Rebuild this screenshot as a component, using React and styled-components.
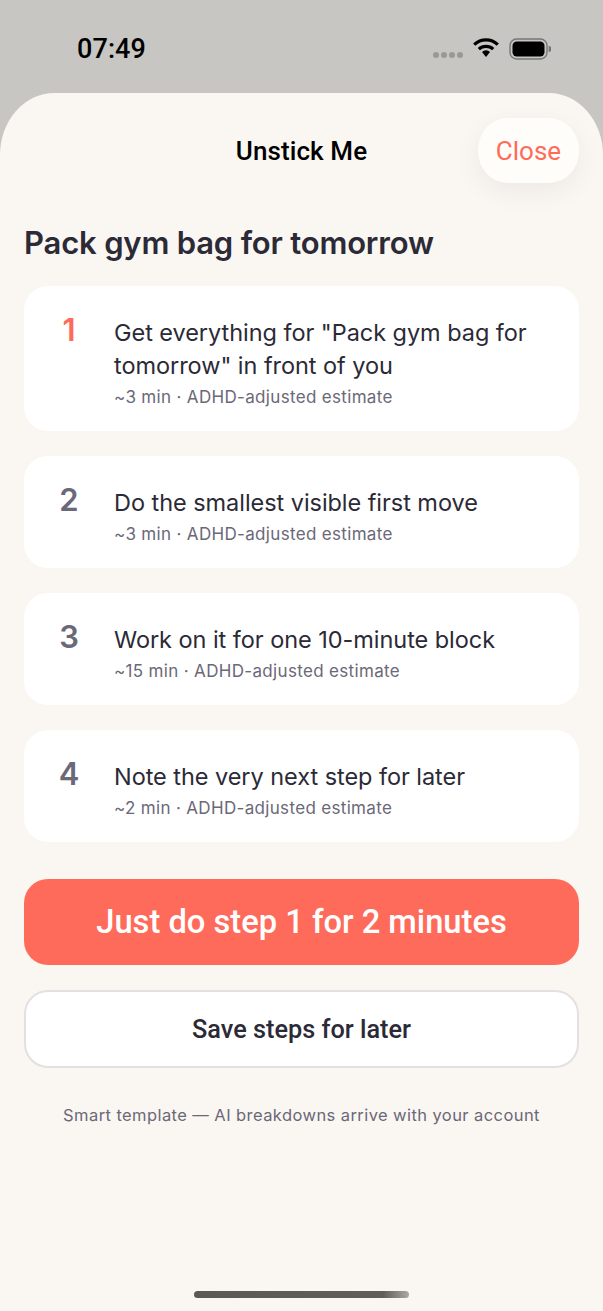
import React from "react";
import styled, { createGlobalStyle } from "styled-components";

const Global = createGlobalStyle`
  html, body { margin: 0; padding: 0; background: #c7c6c2; }
  body { font-family: "Inter", "Liberation Sans", sans-serif; -webkit-font-smoothing: antialiased; }
  * { box-sizing: border-box; }
`;

const Screen = styled.div`
  width: 603px;
  height: 1311px;
  display: flex;
  flex-direction: column;
  overflow: hidden;
  background: #c7c6c2;
`;

const StatusBar = styled.div`
  height: 93px;
  flex: none;
  display: flex;
  align-items: flex-start;
  justify-content: space-between;
  padding: 33px 52px 0 77px;
`;

const Time = styled.div`
  font-family: "Roboto", sans-serif;
  font-size: 27px;
  line-height: 32px;
  font-weight: 500;
  color: #000;
  letter-spacing: 0.1px;
`;

const StatusIcons = styled.div`
  display: flex;
  align-items: center;
  gap: 10px;
  height: 32px;
`;

const Sheet = styled.div`
  position: relative;
  flex: 1;
  background: #faf7f2;
  border-radius: 54px 54px 0 0 / 62px 62px 0 0;
  display: flex;
  flex-direction: column;
  padding: 25px 24px 0;
`;

const Header = styled.header`
  position: relative;
  height: 65px;
  display: flex;
  align-items: center;
  justify-content: center;
`;

const Title = styled.h1`
  margin: 0;
  font-family: "Roboto", sans-serif;
  font-size: 26px;
  font-weight: 500;
  color: #000;
  letter-spacing: 0.1px;
`;

const CloseButton = styled.button`
  position: absolute;
  right: 0;
  top: 0;
  width: 101px;
  height: 65px;
  border: 0;
  padding: 0;
  border-radius: 30px / 32px;
  background: #fffdf9;
  color: #ff6b5b;
  font: 400 26px "Roboto", sans-serif;
  box-shadow: 0 8px 28px rgba(0, 0, 0, 0.06);
`;

const Heading = styled.h2`
  margin: 40px 0 0;
  font-size: 31px;
  line-height: 40px;
  font-weight: 600;
  color: #2b2a36;
  letter-spacing: -0.18px;
`;

const StepList = styled.div`
  margin-top: 23px;
  display: flex;
  flex-direction: column;
  gap: 25px;
`;

const StepCard = styled.div`
  background: #fff;
  border-radius: 24px;
  padding: 30px 24px 23px 90px;
  position: relative;
`;

const StepNumber = styled.span`
  position: absolute;
  left: 25px;
  width: 40px;
  top: 25px;
  text-align: center;
  font-size: 31px;
  line-height: 38px;
  font-weight: 600;
  color: ${(p) => (p.$active ? "#ff6b5b" : "#6b6878")};
`;

const StepText = styled.div`
  font-size: 23.5px;
  line-height: 33px;
  color: #2b2a36;
  letter-spacing: -0.05px;
`;

const StepMeta = styled.div`
  font-size: 17px;
  line-height: 22px;
  margin-top: 4px;
  color: #6b6878;
  letter-spacing: 0.33px;
`;

const PrimaryButton = styled.button`
  margin-top: 37px;
  height: 86px;
  border: 0;
  border-radius: 24px;
  background: #ff6b5b;
  color: #fff;
  font: 500 32.7px "Roboto", sans-serif;
`;

const SecondaryButton = styled.button`
  margin-top: 25px;
  height: 78px;
  border: 2px solid #e3e0e2;
  border-radius: 24px;
  background: #fff;
  color: #2b2a36;
  font: 500 25.3px "Roboto", sans-serif;
`;

const Footnote = styled.p`
  margin: 36px 0 0;
  text-align: center;
  font-size: 16.5px;
  line-height: 22px;
  color: #6b6878;
  letter-spacing: 0.42px;
`;

const HomeIndicator = styled.div`
  position: absolute;
  left: 194px;
  bottom: 13px;
  width: 215px;
  height: 7px;
  border-radius: 4px;
  background: linear-gradient(90deg, #5a5955 0%, #5f5e5a 88%, #aaa9a4 100%);
`;

const steps = [
  { text: 'Get everything for "Pack gym bag for tomorrow" in front of you', meta: "~3 min · ADHD-adjusted estimate" },
  { text: "Do the smallest visible first move", meta: "~3 min · ADHD-adjusted estimate" },
  { text: "Work on it for one 10-minute block", meta: "~15 min · ADHD-adjusted estimate" },
  { text: "Note the very next step for later", meta: "~2 min · ADHD-adjusted estimate" },
];

const SignalDots = () => (
  <svg width="30" height="6" viewBox="0 0 30 6" style={{ marginTop: 12 }}>
    {[3, 11, 19, 27].map((x) => (
      <circle key={x} cx={x} cy="3" r="3" fill="#9a9996" />
    ))}
  </svg>
);

const Wifi = () => (
  <svg width="26" height="20" viewBox="0 0 26 20" style={{ marginTop: -2 }}>
    <path d="M1.2 6.6 A17 17 0 0 1 24.8 6.6" fill="none" stroke="#000" strokeWidth="3.2" />
    <path d="M5.8 11.2 A10.5 10.5 0 0 1 20.2 11.2" fill="none" stroke="#000" strokeWidth="3.2" />
    <path d="M9 14 A5.6 5.6 0 0 1 17 14 L13 19 Z" fill="#000" />
  </svg>
);

const Battery = () => (
  <svg width="42" height="22" viewBox="0 0 42 22">
    <rect x="1" y="1" width="37" height="20" rx="6.5" fill="none" stroke="#77767a" strokeWidth="1.4" />
    <rect x="3.5" y="3.5" width="32" height="15" rx="4.2" fill="#000" />
    <path d="M39.6 8 a3 3 0 0 1 0 6 Z" fill="#77767a" />
  </svg>
);

export default function App() {
  return (
    <Screen>
      <Global />
      <StatusBar>
        <Time>07:49</Time>
        <StatusIcons>
          <SignalDots />
          <Wifi />
          <Battery />
        </StatusIcons>
      </StatusBar>
      <Sheet>
        <Header>
          <Title>Unstick Me</Title>
          <CloseButton>Close</CloseButton>
        </Header>
        <Heading>Pack gym bag for tomorrow</Heading>
        <StepList>
          {steps.map((s, i) => (
            <StepCard key={i}>
              <StepNumber $active={i === 0}>{i + 1}</StepNumber>
              <StepText>{s.text}</StepText>
              <StepMeta>{s.meta}</StepMeta>
            </StepCard>
          ))}
        </StepList>
        <PrimaryButton>Just do step 1 for 2 minutes</PrimaryButton>
        <SecondaryButton>Save steps for later</SecondaryButton>
        <Footnote>Smart template — AI breakdowns arrive with your account</Footnote>
        <HomeIndicator />
      </Sheet>
    </Screen>
  );
}
